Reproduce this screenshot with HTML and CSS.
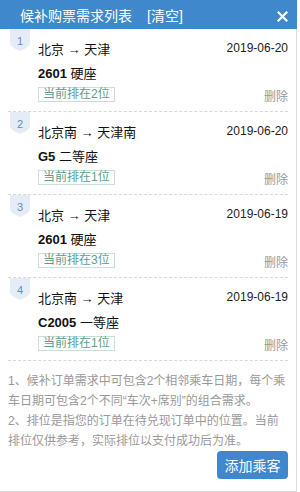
FILE: index.html
```html
<!DOCTYPE html>
<html lang="zh-CN">
<head>
<meta charset="utf-8">
<title>候补购票需求列表</title>
<link rel="stylesheet" href="styles.css">
</head>
<body>
<div class="panel">
  <div class="hd">
    <span class="title">候补购票需求列表</span>
    <span class="clear">[清空]</span>
    <span class="close"><svg width="11" height="11" viewBox="0 0 11 11"><path d="M1.5 1.5L9.5 9.5M9.5 1.5L1.5 9.5" stroke="#fff" stroke-width="2.2" stroke-linecap="square"/></svg></span>
  </div>
  <ul class="list">
    <li class="item">
      <span class="no"><svg width="20" height="22" viewBox="0 0 20 22"><path d="M0 0H20V14Q20 18 10 22Q0 18 0 14Z" fill="#e5ecf7"/></svg><em>1</em></span>
      <div class="row"><span class="route">北京 → 天津</span><span class="date">2019-06-20</span></div>
      <div class="train"><b>2601</b> 硬座</div>
      <div class="row foot"><span class="tag">当前排在2位</span><a class="del">删除</a></div>
    </li>
    <li class="item">
      <span class="no"><svg width="20" height="22" viewBox="0 0 20 22"><path d="M0 0H20V14Q20 18 10 22Q0 18 0 14Z" fill="#e5ecf7"/></svg><em>2</em></span>
      <div class="row"><span class="route">北京南 → 天津南</span><span class="date">2019-06-20</span></div>
      <div class="train"><b>G5</b> 二等座</div>
      <div class="row foot"><span class="tag">当前排在1位</span><a class="del">删除</a></div>
    </li>
    <li class="item">
      <span class="no"><svg width="20" height="22" viewBox="0 0 20 22"><path d="M0 0H20V14Q20 18 10 22Q0 18 0 14Z" fill="#e5ecf7"/></svg><em>3</em></span>
      <div class="row"><span class="route">北京 → 天津</span><span class="date">2019-06-19</span></div>
      <div class="train"><b>2601</b> 硬座</div>
      <div class="row foot"><span class="tag">当前排在3位</span><a class="del">删除</a></div>
    </li>
    <li class="item">
      <span class="no"><svg width="20" height="22" viewBox="0 0 20 22"><path d="M0 0H20V14Q20 18 10 22Q0 18 0 14Z" fill="#e5ecf7"/></svg><em>4</em></span>
      <div class="row"><span class="route">北京南 → 天津</span><span class="date">2019-06-19</span></div>
      <div class="train"><b>C2005</b> 一等座</div>
      <div class="row foot"><span class="tag">当前排在1位</span><a class="del">删除</a></div>
    </li>
  </ul>
  <div class="notes">
    <p>1、候补订单需求中可包含2个相邻乘车日期，每个乘车日期可包含2个不同“车次+席别”的组合需求。</p>
    <p>2、排位是指您的订单在待兑现订单中的位置。当前排位仅供参考，实际排位以支付成功后为准。</p>
  </div>
  <div class="actions"><button class="btn" type="button">添加乘客</button></div>
</div>
</body>
</html>
```

FILE: styles.css
```css
html, body {
  margin: 0;
  padding: 0;
  background: #fff;
}
body {
  font-family: "Liberation Sans", "Noto Sans CJK SC", sans-serif;
  color: #222;
}
.panel {
  width: 296px;
  height: 491px;
  border-right: 1px solid #dcdcdc;
  border-bottom: 1px solid #dcdcdc;
  display: flex;
  flex-direction: column;
}
.hd {
  height: 29px;
  margin-right: -1px;
  background: #3f88cb;
  color: #fff;
  display: flex;
  align-items: center;
  padding: 0 9px 0 20px;
  font-size: 14px;
}
.clear {
  margin-left: 15px;
}
.close {
  margin-left: auto;
  display: flex;
  margin-top: 3px;
}
.list {
  list-style: none;
  margin: 0;
  padding: 0 8px;
}
.item {
  position: relative;
  padding: 9px 0 9px 30px;
  border-bottom: 1px dashed #d8d8d8;
}
.no {
  position: absolute;
  left: 2px;
  top: 0;
  width: 20px;
  height: 22px;
}
.no svg {
  display: block;
}
.no em {
  position: absolute;
  left: 0;
  top: 5px;
  width: 20px;
  text-align: center;
  font-style: normal;
  font-size: 11px;
  line-height: 14px;
  color: #5b8fd2;
}
.row {
  display: flex;
  justify-content: space-between;
  align-items: center;
  height: 20px;
}
.route {
  font-size: 13px;
  color: #111;
}
.date {
  font-size: 12px;
  color: #222;
}
.train {
  margin-top: 6px;
  line-height: 20px;
  font-size: 13px;
  color: #111;
}
.train b {
  font-weight: bold;
}
.foot {
  margin-top: 3px;
  height: 15px;
  align-items: flex-end;
}
.tag {
  font-size: 12px;
  line-height: 13px;
  padding: 0 4px;
  border: 1px solid #cadfd7;
  color: #5c9e8c;
}
.del {
  font-size: 12px;
  line-height: 13px;
  color: #999;
  margin-bottom: -2px;
}
.notes {
  padding: 10px 8px 0;
  font-size: 12px;
  line-height: 20px;
  color: #999;
}
.notes p {
  margin: 0;
}
.actions {
  display: flex;
  justify-content: flex-end;
  padding: 0 8px;
}
.btn {
  width: 71px;
  height: 28px;
  border: 0;
  border-radius: 4px;
  background: #3f88cd;
  color: #fff;
  font-family: "Liberation Sans", "Noto Sans CJK SC", sans-serif;
  font-size: 14px;
  padding: 0;
}
```
